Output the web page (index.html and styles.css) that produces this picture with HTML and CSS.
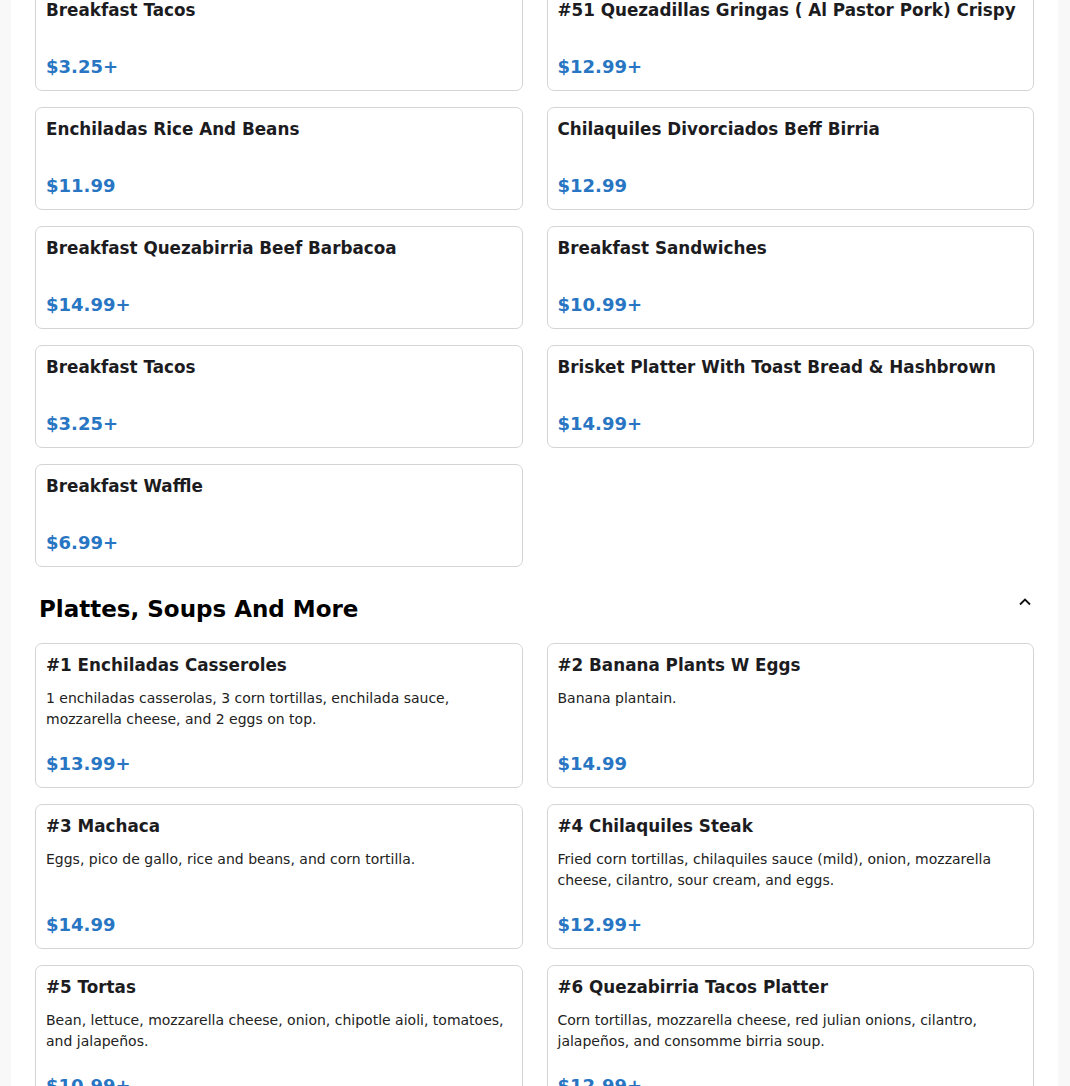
FILE: index.html
```html
<!DOCTYPE html>
<html lang="en">
<head>
    <meta charset="UTF-8">
    <meta name="viewport" content="width=device-width, initial-scale=1.0">
    <title>Menu</title>
    <link rel="stylesheet" href="styles.css">
</head>
<body>
    <div id="menu">
        <div class="item-grid first-grid">
            <div class="item-card">
                <h3 class="item-name">Breakfast Tacos</h3>
                <div class="item-price">$3.25+</div>
            </div>
            <div class="item-card">
                <h3 class="item-name">#51 Quezadillas Gringas ( Al Pastor Pork) Crispy</h3>
                <div class="item-price">$12.99+</div>
            </div>
            <div class="item-card">
                <h3 class="item-name">Enchiladas Rice And Beans</h3>
                <div class="item-price">$11.99</div>
            </div>
            <div class="item-card">
                <h3 class="item-name">Chilaquiles Divorciados Beff Birria</h3>
                <div class="item-price">$12.99</div>
            </div>
            <div class="item-card">
                <h3 class="item-name">Breakfast Quezabirria Beef Barbacoa</h3>
                <div class="item-price">$14.99+</div>
            </div>
            <div class="item-card">
                <h3 class="item-name">Breakfast Sandwiches</h3>
                <div class="item-price">$10.99+</div>
            </div>
            <div class="item-card">
                <h3 class="item-name">Breakfast Tacos</h3>
                <div class="item-price">$3.25+</div>
            </div>
            <div class="item-card">
                <h3 class="item-name">Brisket Platter With Toast Bread &amp; Hashbrown</h3>
                <div class="item-price">$14.99+</div>
            </div>
            <div class="item-card">
                <h3 class="item-name">Breakfast Waffle</h3>
                <div class="item-price">$6.99+</div>
            </div>
        </div>

        <div class="section-header">
            <h2 class="section-title">Plattes, Soups And More</h2>
            <button class="collapse-btn" aria-label="Collapse">
                <svg width="14" height="14" viewBox="0 0 14 14"><path d="M2 9.5 L7 4.5 L12 9.5" fill="none" stroke="#111" stroke-width="1.8"/></svg>
            </button>
        </div>

        <div class="item-grid">
            <div class="item-card">
                <h3 class="item-name">#1 Enchiladas Casseroles</h3>
                <p class="item-desc">1 enchiladas casserolas, 3 corn tortillas, enchilada sauce, mozzarella cheese, and 2 eggs on top.</p>
                <div class="item-price">$13.99+</div>
            </div>
            <div class="item-card">
                <h3 class="item-name">#2 Banana Plants W Eggs</h3>
                <p class="item-desc">Banana plantain.</p>
                <div class="item-price">$14.99</div>
            </div>
            <div class="item-card">
                <h3 class="item-name">#3 Machaca</h3>
                <p class="item-desc">Eggs, pico de gallo, rice and beans, and corn tortilla.</p>
                <div class="item-price">$14.99</div>
            </div>
            <div class="item-card">
                <h3 class="item-name">#4 Chilaquiles Steak</h3>
                <p class="item-desc">Fried corn tortillas, chilaquiles sauce (mild), onion, mozzarella cheese, cilantro, sour cream, and eggs.</p>
                <div class="item-price">$12.99+</div>
            </div>
            <div class="item-card">
                <h3 class="item-name">#5 Tortas</h3>
                <p class="item-desc">Bean, lettuce, mozzarella cheese, onion, chipotle aioli, tomatoes, and jalapeños.</p>
                <div class="item-price">$10.99+</div>
            </div>
            <div class="item-card">
                <h3 class="item-name">#6 Quezabirria Tacos Platter</h3>
                <p class="item-desc">Corn tortillas, mozzarella cheese, red julian onions, cilantro, jalapeños, and consomme birria soup.</p>
                <div class="item-price">$12.99+</div>
            </div>
        </div>
    </div>
</body>
</html>
```

FILE: styles.css
```css
body, html {
    margin: 0;
    padding: 0;
    background-color: #f8f8f8;
    font-family: "DejaVu Sans", Verdana, sans-serif;
    color: #1c1c1f;
}
#menu {
    margin: 0 12px 0 11px;
    padding: 0 24px 40px;
    background-color: #fff;
    overflow: hidden;
}
.item-grid {
    display: grid;
    grid-template-columns: 1fr 1fr;
    column-gap: 24px;
    row-gap: 16px;
}
.first-grid {
    margin-top: -12px;
}
.item-card {
    border: 1px solid #d4d4d4;
    border-radius: 7px;
    padding: 10px;
    display: flex;
    flex-direction: column;
}
.item-name {
    margin: 0 0 12px;
    font-size: 16.8px;
    line-height: 22px;
    font-weight: bold;
}
.item-desc {
    margin: 0;
    font-size: 14px;
    line-height: 21px;
    color: #222;
}
.item-price {
    margin-top: auto;
    padding-top: 20px;
    font-size: 18px;
    line-height: 27px;
    font-weight: bold;
    color: #2876c3;
}
.section-header {
    display: flex;
    align-items: center;
    justify-content: space-between;
    padding: 26px 0 18px 4px;
}
.section-title {
    margin: 0;
    font-size: 23px;
    line-height: 32px;
    font-weight: bold;
    color: #000;
}
.collapse-btn {
    background: none;
    border: none;
    padding: 0;
    width: 18px;
    height: 18px;
    align-self: flex-start;
    margin-top: 0;
    display: flex;
    align-items: center;
    justify-content: center;
}
```
